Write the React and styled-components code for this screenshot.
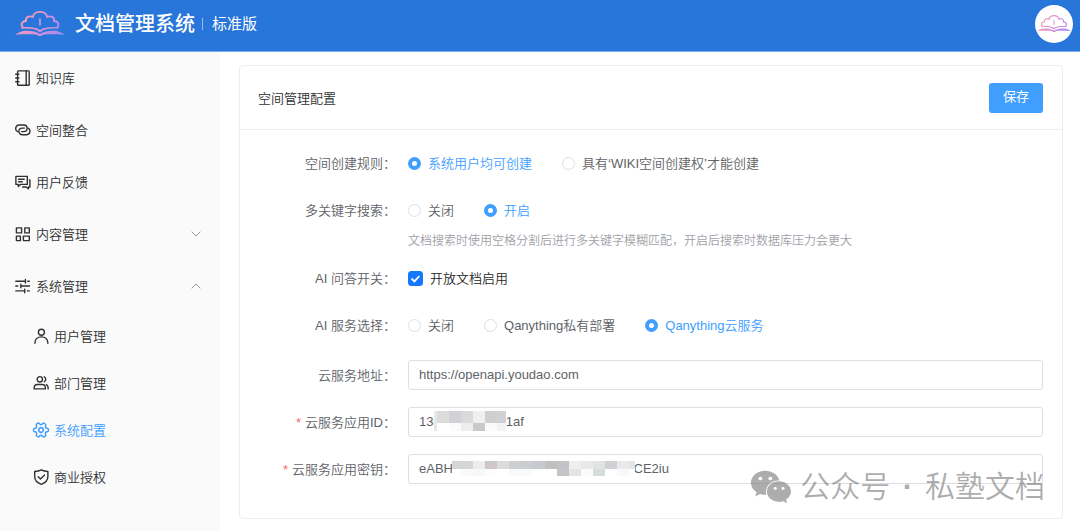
import React, { useState } from 'react';
import styled, { createGlobalStyle } from 'styled-components';
import { Settings, ChevronDown, ChevronUp } from 'lucide-react';
import { FaWeixin } from 'react-icons/fa';

const GlobalStyle = createGlobalStyle`
	* {
		box-sizing: border-box;
	}
	body {
		margin: 0;
		background: #ffffff;
		color: #303133;
		font-family: "Liberation Sans", "Noto Sans CJK SC", sans-serif;
		font-size: 13px;
		font-weight: 350;
	}
	button, input {
		font: inherit;
	}
`

const Page = styled.div`
	display: flex;
	flex-direction: column;
	min-height: 100vh;
`
const Header = styled.header`
	display: flex;
	align-items: center;
	justify-content: space-between;
	height: 52px;
	padding: 0 7px 4px 15px;
	background: #2876d9;
	border-bottom: 1px solid #7eacea;
	color: #ffffff;
`
const Brand = styled.div`
	display: flex;
	align-items: center;
`
const Title = styled.h1`
	margin: 0 7px 0 10px;
	font-size: 20px;
	font-weight: 500;
	line-height: 28px;
`
const Edition = styled.span`
	padding-left: 9px;
	font-size: 15px;
	font-weight: 400;
	line-height: 12px;
	border-left: 1px solid #93bbec;
`
const Avatar = styled.button`
	display: flex;
	align-items: center;
	justify-content: center;
	width: 38px;
	height: 38px;
	padding: 0;
	border: 0;
	border-radius: 50%;
	background: #ffffff;
`
const Body = styled.div`
	display: flex;
	flex: 1;
`
const Sidebar = styled.nav`
	flex: 0 0 220px;
	background: #fafafa;
`
const MenuLink = styled.a`
	display: flex;
	align-items: center;
	gap: 5px;
	width: 100%;
	height: ${props => props.$sub ? '47px' : '52px'};
	padding: 0 16px 0 ${props => props.$sub ? '33px' : '15px'};
	border: 0;
	background: none;
	color: ${props => props.$active ? '#409eff' : '#303133'};
	text-align: left;
	text-decoration: none;
	cursor: pointer;
`
const MenuText = styled.span`
	flex: 1;
	padding-top: 2px;
	line-height: 20px;
`
const Icon = styled.svg`
	width: 16px;
	height: 16px;
	flex: none;
	fill: none;
	stroke: currentColor;
	stroke-width: 1.4;
	stroke-linecap: round;
	stroke-linejoin: round;
`
const GearIcon = styled(Settings)`
	transform: rotate(30deg);
`
const Main = styled.main`
	flex: 1;
	min-width: 0;
	padding: 13px 17px 12px 19px;
`
const Card = styled.section`
	position: relative;
	border: 1px solid #ebeef5;
	border-radius: 4px;
`
const CardHeader = styled.div`
	display: flex;
	align-items: center;
	justify-content: space-between;
	height: 64px;
	padding: 0 19px 0 18px;
	border-bottom: 1px solid #ebeef5;
`
const CardTitle = styled.h2`
	margin: 0;
	padding-top: 2px;
	font-size: 13px;
	font-weight: inherit;
	line-height: 20px;
`
const SaveButton = styled.button`
	height: 30px;
	padding: 0 14px 2px;
	border: 0;
	border-radius: 3px;
	background: #409eff;
	color: #ffffff;
	font-weight: 400;
	line-height: 28px;
	cursor: pointer;
`
const Form = styled.form`
	display: flex;
	flex-direction: column;
	gap: 20px;
	padding: 18px 19px 34px 18px;
`
const Group = styled.div`
	display: flex;
	flex-direction: column;
	gap: 17px;
`
const Row = styled.div`
	display: grid;
	grid-template-columns: 138px 1fr;
	column-gap: 12px;
	color: #606266;
`
const Label = styled.label`
	height: 30px;
	line-height: 32px;
	text-align: right;
	white-space: nowrap;
`
const Required = styled.span`
	margin-right: 4px;
	color: #f56c6c;
`
const Options = styled.div`
	display: flex;
	align-items: center;
	gap: 30px;
	height: 30px;
`
const Option = styled.label`
	display: flex;
	align-items: center;
	gap: 7px;
	height: 30px;
	color: ${props => props.$checked ? '#409eff' : '#606266'};
	cursor: pointer;
`
const CheckOption = styled(Option)`
	color: #1f1f1f;
`
const OptionText = styled.span`
	padding-top: 2px;
	line-height: 20px;
`
const RadioInput = styled.input`
	appearance: none;
	width: 13px;
	height: 13px;
	margin: 0;
	border: 1px solid #dcdfe6;
	border-radius: 50%;
	background: #ffffff;

	&:checked {
		border: 4px solid #409eff;
	}
`
const CheckBox = styled.span`
	display: grid;
	width: 15px;
	height: 15px;
`
const CheckInput = styled.input`
	grid-area: 1 / 1;
	appearance: none;
	width: 15px;
	height: 15px;
	margin: 0;
	border: 1px solid #d9d9d9;
	border-radius: 3px;

	&:checked {
		border-color: #1677ff;
		background: #1677ff;
	}
`
const CheckMark = styled.svg`
	grid-area: 1 / 1;
	width: 15px;
	height: 15px;
	pointer-events: none;
`
const Hint = styled.div`
	height: 21px;
	color: #a0a2a8;
	font-size: 12px;
	line-height: 32px;
`
const Field = styled.div`
	position: relative;
`
const TextInput = styled.input`
	display: block;
	width: 100%;
	height: 30px;
	padding: 0 10px 2px;
	border: 1px solid #dcdfe6;
	border-radius: 3px;
	background: #ffffff;
	color: #606266;
	outline: none;
`
const Mask = styled.svg`
	position: absolute;
	left: ${props => props.$left}px;
	top: ${props => props.$top}px;
`
const Watermark = styled.div`
	position: absolute;
	right: 17px;
	bottom: 9px;
	display: flex;
	align-items: center;
	gap: 8px;
	color: #787878;
	font-size: 30px;
	font-weight: 350;
	line-height: 44px;
	white-space: pre;
	opacity: 0.6;
	pointer-events: none;
`
const Dot = styled.span`
	margin: 0 4px;
	font-weight: 700;
`

const icons = {
	notebook: <><rect x="2.6" y="0.9" width="11.6" height="14.3" rx="0.8" /><path d="M11.2 1v14M.7 4.2h3.2M.7 8h3.2M.7 11.8h3.2" /></>,
	link: <><path d="M2.8 9.7A3.5 3.5 0 0 1 4.1 3h4.7a3.3 3.3 0 0 1 0 6.6H6.6" /><path d="M13.1 6.1a3.5 3.5 0 0 1-1.4 6.6H7.2a3.3 3.3 0 0 1 0-6.6h2.2" /></>,
	feedback: <><path d="M.9 2.4h11.4v8H5.6l-2.4 2v-2H.9z" /><path d="M3.6 5.3h5.6M3.6 7.7h3.6M14.9 6v7h-1.5v1.7L11.2 13H7.6M14.9 6h-.6" /></>,
	grid: <path d="M1.4 1.900h5.200v5H1.400zM9.800 1.900h4.500v5H9.800zM1.400 10.100h4v4.500h-4zM8.400 10.100h5.900v4.500H8.400z" />,
	sliders: <path d="M.8 3.3h8.4M10.4 1.5v3.6M12.7 3.3h1.6M.8 8h2M5.8 6.2v3.6M5.8 8h8.7M.8 12.9h8.4M9.7 11.1v3.6M12.4 12.9h1.9" />,
	user: <><circle cx="8.4" cy="4.2" r="3" /><path d="M1.9 15.2c0-4 2.7-6.3 6.5-6.3s6.5 2.3 6.5 6.3" /></>,
	users: <><circle cx="6.8" cy="4.3" r="2.7" /><path d="M1.2 13.9v-1.2c0-2.2 1.5-3.2 3.3-3.2h4.7c1.8 0 3.2 1 3.2 3.2v1.2zM11.2 1.9a2.7 2.7 0 0 1 0 4.9M13.4 9.6c1.4.6 1.8 1.9 1.8 4.3" /></>,
	shield: <><path d="M8.3.9c2 1.3 4.1 1.6 6.6 1.6v5.1c0 3.8-2.6 6.3-6.6 7.7-4-1.4-6.6-3.9-6.6-7.7V2.5c2.5 0 4.6-.3 6.6-1.6z" /><path d="m5.2 7.8 2.3 2.3 4-4" /></>,
}

const subMenu = [
	{ text: '用户管理', icon: 'user' },
	{ text: '部门管理', icon: 'users' },
	{ text: '系统配置', icon: 'gear', active: true },
	{ text: '商业授权', icon: 'shield' },
]

const idCells = [
	{ w: 3, top: '#e8e8e8', bottom: '#e9e9e9' },
	{ w: 12, top: '#dcdcdd', bottom: '#ffffff' },
	{ w: 12, top: '#d2d2d6', bottom: '#fbfbfb' },
	{ w: 12, top: '#dadada', bottom: '#eeeeee' },
	{ w: 12, top: '#f2f0ee', bottom: '#c9c9ca' },
	{ w: 12, top: '#cfcfd1', bottom: '#fbfbfb' },
	{ w: 9, top: '#d0d1d4', bottom: '#f3f3f3' },
]
const keyCells = [
	{ w: 9, top: '#d3d5d6', bottom: '#ffffff' },
	{ w: 12, top: '#d6d6d8', bottom: '#f8fbfa' },
	{ w: 12, top: '#ededee', bottom: '#f6f9fa' },
	{ w: 12, top: '#cdc8c6', bottom: '#fdfdfd' },
	{ w: 12, top: '#dcdcde', bottom: '#ffffff' },
	{ w: 12, top: '#cfcfcf', bottom: '#f6fafa' },
	{ w: 12, top: '#cacdd2', bottom: '#fafafa' },
	{ w: 12, top: '#c6c9cd', bottom: '#ffffff' },
	{ w: 12, top: '#c2bfbd', bottom: '#ffffff' },
	{ w: 12, top: '#c2c3c8', bottom: '#c4c5c9' },
	{ w: 12, top: '#f0eeef', bottom: '#e2e4e6' },
	{ w: 12, top: '#e8eaea', bottom: '#fbfbfb' },
	{ w: 12, top: '#dfe3e2', bottom: '#d6dbdc' },
	{ w: 12, top: '#d0d1d5', bottom: '#ffffff' },
	{ w: 12, top: '#e9e9eb', bottom: '#f8f9f9' },
	{ w: 6, top: '#e4e6e6', bottom: '#ffffff' },
]

const gap = (n) => '\u00a0'.repeat(n)

function Logo({ width, id }) {
	return (
		<svg width={width} height={width / 2} viewBox="0 0 50 25" fill="none" aria-hidden="true">
			<defs>
				<linearGradient id={id} x1="8" y1="2" x2="40" y2="25" gradientUnits="userSpaceOnUse">
					<stop offset="0" stopColor="#f7a0b0" />
					<stop offset="0.5" stopColor="#dc92d6" />
					<stop offset="1" stopColor="#b08cec" />
				</linearGradient>
			</defs>
			<path d="M7.500 15.500C5.400 13.500 7 10 11 10c-.8-4 3.400-5.600 6.800-4C18.600 2.200 21.400.9 25 .9s6.400 1.300 7.200 5.100c3.400-1.600 7.600 0 6.800 4 4 0 5.600 3.500 3.500 5.500" stroke={`url(#${id})`} strokeWidth="1.800" strokeLinecap="round" />
			<path d="M25 8v6" stroke="#d79be0" strokeWidth="1.600" strokeLinecap="round" />
			<g fill={`url(#${id})`}>
				<path d="M5 16.500c8-.8 16-.6 20 2.400 4-3 12-3.200 20-2.400l-2.500 1.200c-7-.4-13.500.1-17.500 3.700-4-3.600-10.500-4.100-17.500-3.700z" />
				<path d="M8 19.900c6.500-.5 12.500-.1 17 3 4.500-3.100 10.500-3.500 17-3l4 1.600 4 2.300c-8-.6-16-.6-22-.1L26.500 25h-3L22 23.700c-6-.5-14-.5-22 .1l4-2.300z" />
			</g>
		</svg>
	)
}

function MenuIcon({ name }) {
	if (name === 'gear') return <GearIcon size={16} viewBox="1.5 1.5 21 21" strokeWidth={2} />
	return <Icon viewBox="0 0 16 16">{icons[name]}</Icon>
}

function RadioRow({ label, name, options, value, onChange, hint }) {
	return (
		<Row role="radiogroup" aria-labelledby={name + '-label'}>
			<Label as="span" id={name + '-label'}>{label}：</Label>
			<div>
				<Options>
					{options.map(text => (
						<Option key={text} $checked={text === value}>
							<RadioInput type="radio" name={name} checked={text === value} onChange={() => onChange(text)} />
							<OptionText>{text}</OptionText>
						</Option>
					))}
				</Options>
				{hint && <Hint>{hint}</Hint>}
			</div>
		</Row>
	)
}

function MaskBlocks({ cells, left, top, topHeight, bottomHeight }) {
	const width = cells.reduce((sum, cell) => sum + cell.w, 0)
	let x = 0
	return (
		<Mask $left={left} $top={top} width={width} height={topHeight + bottomHeight} aria-hidden="true">
			{cells.map((cell, i) => {
				const start = x
				x += cell.w
				return (
					<g key={i}>
						<rect x={start} y="0" width={cell.w} height={topHeight} fill={cell.top} />
						<rect x={start} y={topHeight} width={cell.w} height={bottomHeight} fill={cell.bottom} />
					</g>
				)
			})}
		</Mask>
	)
}

function InputRow({ label, id, required, value, children }) {
	return (
		<Row>
			<Label htmlFor={id}>{required && <Required>*</Required>}{label}：</Label>
			<Field>
				<TextInput id={id} type="text" defaultValue={value} required={required} />
				{children}
			</Field>
		</Row>
	)
}

function App() {
	const [open, setOpen] = useState(true)
	const [rule, setRule] = useState('系统用户均可创建')
	const [search, setSearch] = useState('开启')
	const [service, setService] = useState('Qanything云服务')
	const [ai, setAi] = useState(true)
	const Arrow = open ? ChevronUp : ChevronDown

	return (
		<Page>
			<GlobalStyle />
			<Header>
				<Brand>
					<Logo width={50} id="logo" />
					<Title>文档管理系统</Title>
					<Edition>标准版</Edition>
				</Brand>
				<Avatar type="button" aria-label="用户">
					<Logo width={34} id="avatar" />
				</Avatar>
			</Header>
			<Body>
				<Sidebar>
					<MenuLink href="#"><MenuIcon name="notebook" /><MenuText>知识库</MenuText></MenuLink>
					<MenuLink href="#"><MenuIcon name="link" /><MenuText>空间整合</MenuText></MenuLink>
					<MenuLink href="#"><MenuIcon name="feedback" /><MenuText>用户反馈</MenuText></MenuLink>
					<MenuLink as="button" type="button" aria-expanded="false">
						<MenuIcon name="grid" /><MenuText>内容管理</MenuText><ChevronDown size={16} strokeWidth={1} color="#606266" />
					</MenuLink>
					<MenuLink as="button" type="button" aria-expanded={open} onClick={() => setOpen(!open)}>
						<MenuIcon name="sliders" /><MenuText>系统管理</MenuText><Arrow size={16} strokeWidth={1} color="#606266" />
					</MenuLink>
					{open && subMenu.map(item => (
						<MenuLink key={item.text} href="#" $sub $active={item.active}>
							<MenuIcon name={item.icon} /><MenuText>{item.text}</MenuText>
						</MenuLink>
					))}
				</Sidebar>
				<Main>
					<Card>
						<CardHeader>
							<CardTitle>空间管理配置</CardTitle>
							<SaveButton type="submit" form="config">保存</SaveButton>
						</CardHeader>
						<Form id="config" onSubmit={e => e.preventDefault()}>
							<Group>
								<RadioRow label="空间创建规则" name="rule" value={rule} onChange={setRule}
									options={['系统用户均可创建', '具有‘WIKI空间创建权’才能创建']} />
								<RadioRow label="多关键字搜索" name="search" value={search} onChange={setSearch}
									options={['关闭', '开启']}
									hint="文档搜索时使用空格分割后进行多关键字模糊匹配，开启后搜索时数据库压力会更大" />
								<Row>
									<Label htmlFor="ai">AI 问答开关：</Label>
									<Options>
										<CheckOption>
											<CheckBox>
												<CheckInput id="ai" type="checkbox" checked={ai} onChange={() => setAi(!ai)} />
												<CheckMark viewBox="0 0 15 15"><path d="m3.5 7.5 2.9 2.9 5-5.4" fill="none" stroke="#ffffff" strokeWidth="1.8" /></CheckMark>
											</CheckBox>
											<OptionText>开放文档启用</OptionText>
										</CheckOption>
									</Options>
								</Row>
								<RadioRow label="AI 服务选择" name="service" value={service} onChange={setService}
									options={['关闭', 'Qanything私有部署', 'Qanything云服务']} />
							</Group>
							<Group>
								<InputRow label="云服务地址" id="address" value="https://openapi.youdao.com" />
								<InputRow label="云服务应用ID" id="appid" required value={'130' + gap(18) + '1af'}>
									<MaskBlocks cells={idCells} left={26} top={4} topHeight={12} bottomHeight={8} />
								</InputRow>
								<InputRow label="云服务应用密钥" id="secret" required value={'eABH' + gap(50) + 'CE2iu'}>
									<MaskBlocks cells={keyCells} left={44} top={7} topHeight={8} bottomHeight={7} />
								</InputRow>
							</Group>
						</Form>
						<Watermark>
							<FaWeixin size={42} />
							<span>公众号<Dot> · </Dot>私塾文档</span>
						</Watermark>
					</Card>
				</Main>
			</Body>
		</Page>
	)
}

export default App;
